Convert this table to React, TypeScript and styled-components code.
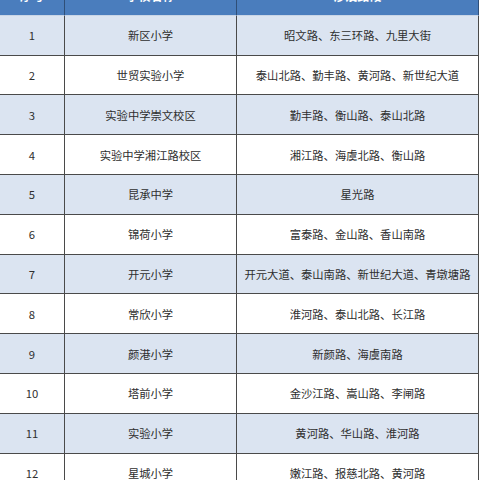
import styled, { createGlobalStyle } from 'styled-components';

type Row = {
  no: number;
  school: string;
  roads: string;
};

const rows: Row[] = [
  { no: 1, school: '新区小学', roads: '昭文路、东三环路、九里大街' },
  { no: 2, school: '世贸实验小学', roads: '泰山北路、勤丰路、黄河路、新世纪大道' },
  { no: 3, school: '实验中学崇文校区', roads: '勤丰路、衡山路、泰山北路' },
  { no: 4, school: '实验中学湘江路校区', roads: '湘江路、海虞北路、衡山路' },
  { no: 5, school: '昆承中学', roads: '星光路' },
  { no: 6, school: '锦荷小学', roads: '富泰路、金山路、香山南路' },
  { no: 7, school: '开元小学', roads: '开元大道、泰山南路、新世纪大道、青墩塘路' },
  { no: 8, school: '常欣小学', roads: '淮河路、泰山北路、长江路' },
  { no: 9, school: '颜港小学', roads: '新颜路、海虞南路' },
  { no: 10, school: '塔前小学', roads: '金沙江路、嵩山路、李闸路' },
  { no: 11, school: '实验小学', roads: '黄河路、华山路、淮河路' },
  { no: 12, school: '星城小学', roads: '嫩江路、报慈北路、黄河路' },
];

const GlobalStyle = createGlobalStyle`
  html, body {
    margin: 0;
    padding: 0;
    background: #ffffff;
    overflow: hidden;
  }
  body {
    font-family: "Noto Sans CJK SC", "Liberation Sans", sans-serif;
  }
`;

export default function App() {
  return (
    <>
      <GlobalStyle />
      <Table>
        <HeadCell>序号</HeadCell>
        <HeadCell>学校名称</HeadCell>
        <HeadCell>涉及路段</HeadCell>
        {rows.map((row) => (
          <RowGroup key={row.no} $shaded={row.no % 2 === 1}>
            <Cell>{row.no}</Cell>
            <Cell>{row.school}</Cell>
            <Cell>{row.roads}</Cell>
          </RowGroup>
        ))}
      </Table>
    </>
  );
}

const Table = styled.div`
  display: grid;
  grid-template-columns: 65px 172px 242px;
  grid-auto-rows: 39.8px;
  width: 479px;
  margin-top: -24px;
`;

const HeadCell = styled.div`
  box-sizing: border-box;
  height: 40px;
  display: flex;
  align-items: center;
  justify-content: center;
  background: #4a7dbd;
  color: #ffffff;
  font-size: 12px;
  font-weight: bold;
  border-right: 1px solid #2f4f78;
  border-bottom: 1px solid #c9d5e6;
`;

const RowGroup = styled.div<{ $shaded: boolean }>`
  display: contents;

  & > div {
    background: ${({ $shaded }) => ($shaded ? '#dbe4f1' : '#ffffff')};
  }
`;

const Cell = styled.div`
  box-sizing: border-box;
  display: flex;
  align-items: center;
  justify-content: center;
  color: #2e2e2e;
  font-size: 11.3px;
  white-space: nowrap;
  border-right: 1px solid #4a4a4a;
  border-bottom: 1px solid #4a4a4a;
`;
